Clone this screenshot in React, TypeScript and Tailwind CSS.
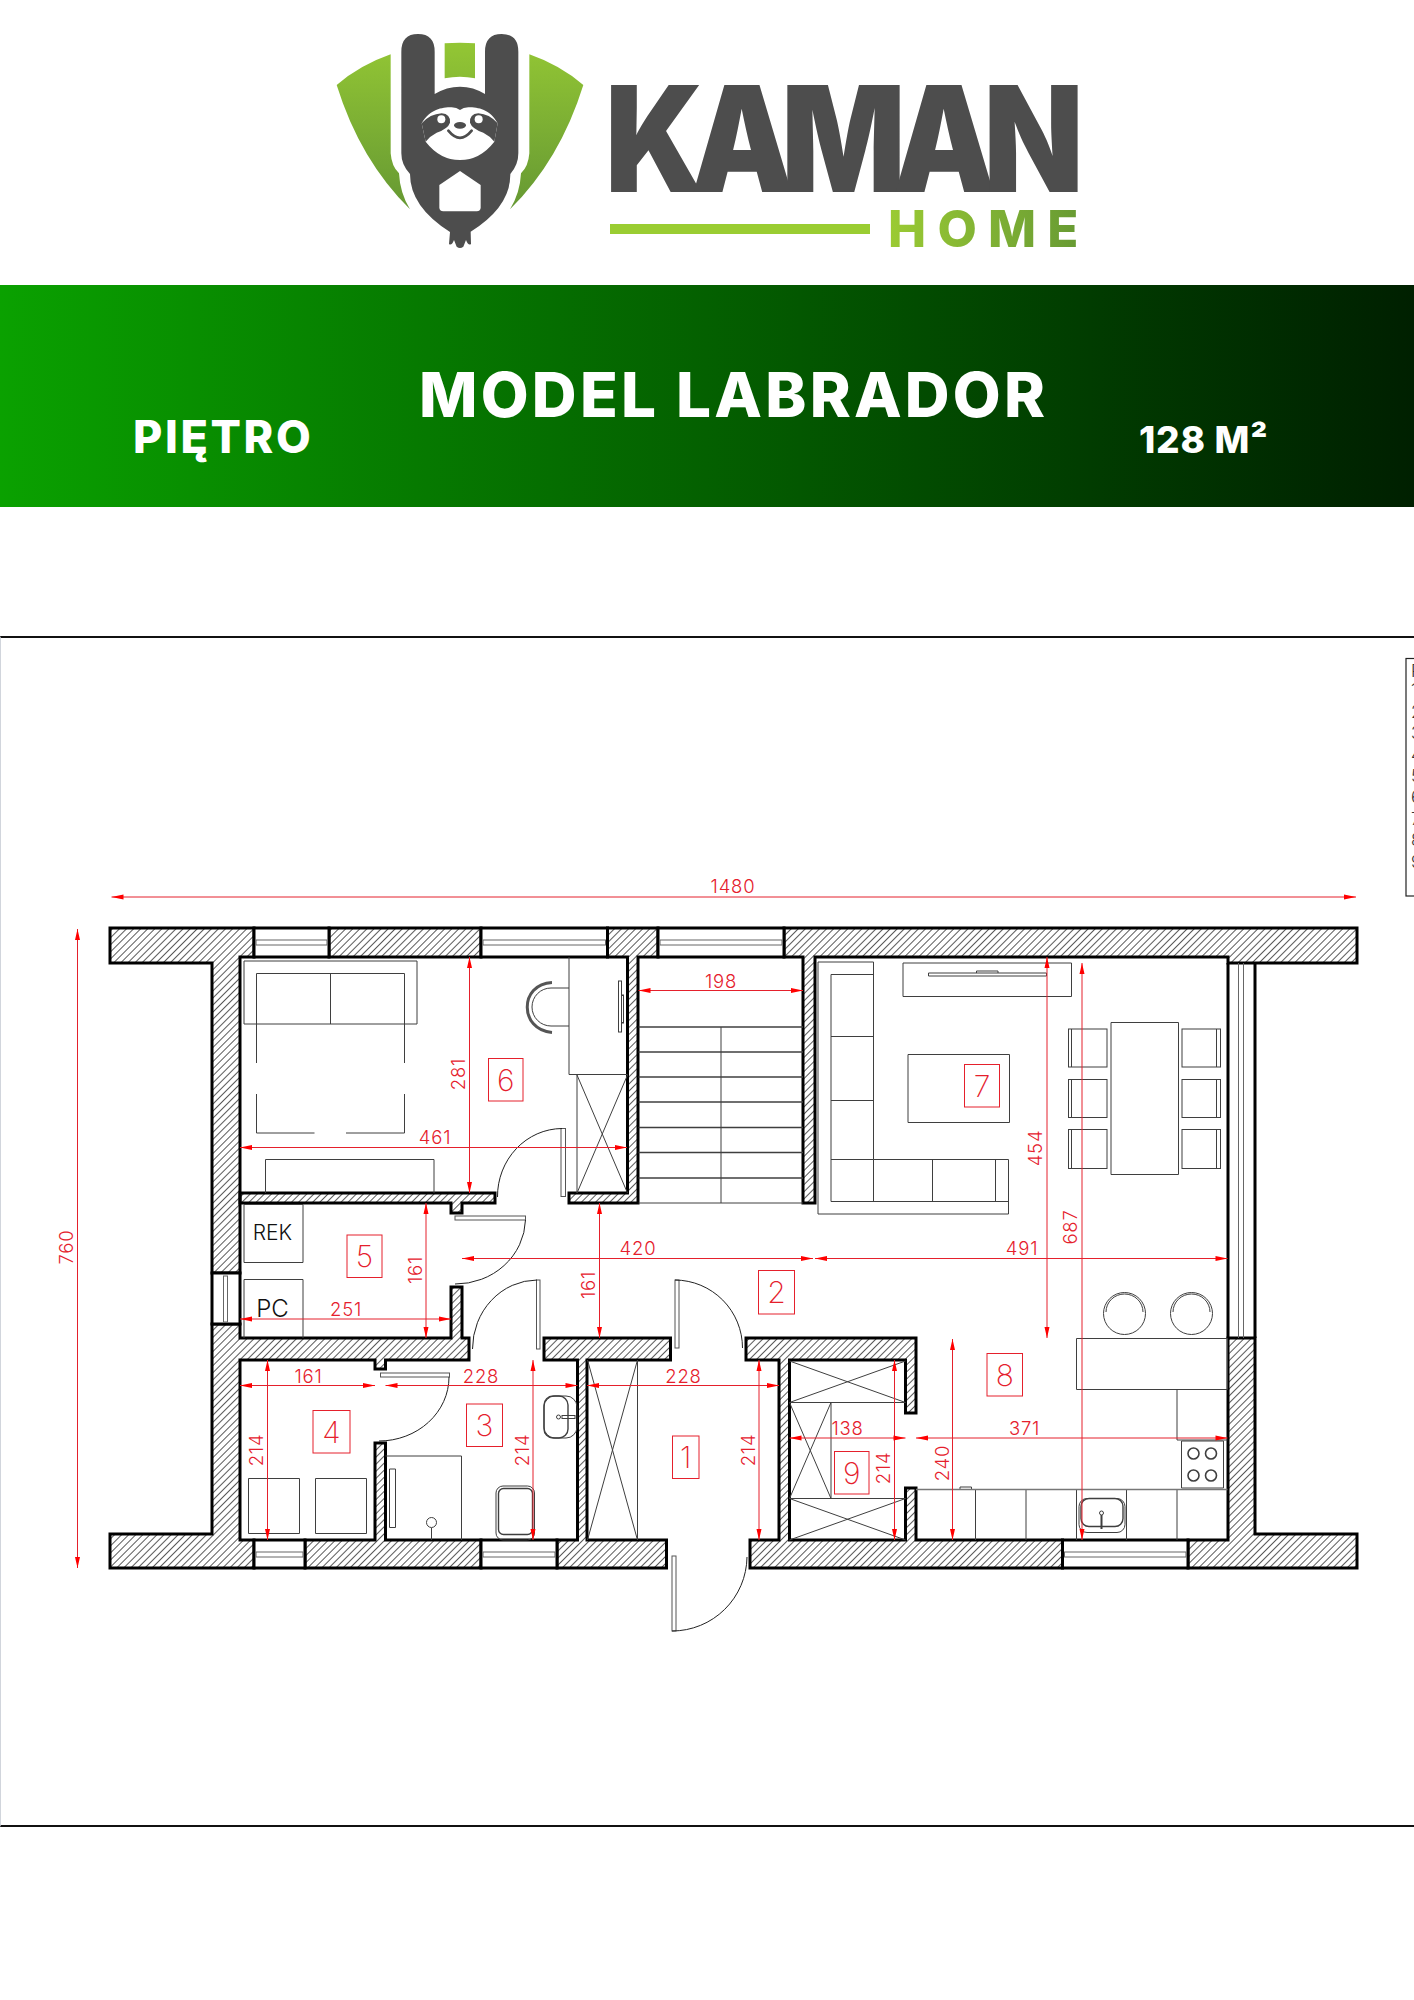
const INK = '#3f3f3f'
const RED = '#e5202c'

type Pt = [number, number]

const walls = [
  'M109 928H253V957H239V1273H211V963H109Z',
  'M328 928H480V957H328Z',
  'M606.5 928H657V957H637V1203H568V1193H626.5V957H606.5Z',
  'M783 928H1356V963H1227V957H814V1203H802V957H783Z',
  'M239 1193H494V1203H461V1213H450V1203H239Z',
  'M211 1324H239V1338H450V1287H461V1338H468V1360H384.5V1369H374V1360H239V1540H253V1568H109V1534H211Z',
  'M304 1540H374V1443H384.5V1540H480V1568H304Z',
  'M556 1540H576.5V1360H543V1338H669.5V1360H586V1540H665.5V1568H556Z',
  'M745 1338H915V1413H904.5V1360H788.5V1540H904.5V1488H915V1540H1061.5V1568H749V1540H778V1360H745Z',
  'M1187 1540H1227V1338H1254V1534H1356V1568H1187Z',
]

// horizontal window openings in the outer walls
const windows = [
  [253, 928, 75, 29, 940],
  [480, 928, 126.5, 29, 940],
  [657, 928, 126, 29, 940],
  [253, 1540, 51, 28, 1552],
  [480, 1540, 76, 28, 1552],
  [1061.5, 1540, 125.5, 28, 1552],
]

const lines = [
  // bedroom
  'M243 961H416V1024H243Z',
  'M255.5 1063V973.5H403.5V1063',
  'M329.5 973.5V1024',
  'M255.5 1094V1133H313.5M345 1133H403.5V1094',
  'M264.5 1193V1159.5H433V1193',
  'M568 957V1074.5H626.5',
  'M576 1075V1193M576 1075L626.5 1193M626.5 1075L576 1193',
  'M568 988H550A19 19 0 0 0 550 1026H568',
  // storage
  'M243 1204.5H302V1262.5H243ZM243 1338V1279.5H302V1338',
  // bath and room 4
  'M247.5 1478.5H298.5V1533.5H247.5ZM314.5 1478.5H365.5V1533.5H314.5Z',
  'M384.5 1456H460.5V1540',
  'M388.5 1469H394.5V1527.5H388.5Z',
  'M430.5 1528V1540',
  // entrance closet
  'M636.5 1360V1540M586.5 1360L636.5 1540M636.5 1360L586.5 1540',
  // closet 9
  'M788.5 1402.5H904.5M788.5 1498.5H904.5M830 1402.5V1498.5',
  'M788.5 1361L904.5 1402.5M904.5 1361L788.5 1402.5',
  'M788.5 1498.5L904.5 1540M904.5 1498.5L788.5 1540',
  'M788.5 1402.5L830 1498.5M830 1402.5L788.5 1498.5',
  // kitchen
  'M974.5 1489V1540M1025 1489V1540M1075.5 1489V1540M1125.5 1489V1540M1176 1489V1540',
  'M1075.5 1338.5H1226.5V1389.5H1075.5Z',
  'M1176 1389.5V1440H1226.5',
  'M1180.5 1441H1222.5V1488H1180.5Z',
  'M959 1489V1487H970.5V1489',
  // living room
  'M817 962H872.5V1159.5H1007.5V1214H817Z',
  'M872.5 974.5H830V1201.5H1007.5',
  'M830 1036.5H872.5M830 1100.5H872.5M830 1159.5H872.5',
  'M872.5 1159.5V1201.5M931.5 1159.5V1201.5M994.5 1159.5V1201.5',
  'M902 963H1070.5V996.5H902Z',
  'M927.5 973H1045.5V976H927.5ZM975.5 973V971H997V973',
  'M907 1054.5H1008.5V1122.5H907Z',
  'M1110 1022.5H1177.5V1174.5H1110Z',
  'M1070.5 1029V1067M1070.5 1079.5V1117.5M1070.5 1129.5V1168.5',
  'M1215.5 1029V1067M1215.5 1079.5V1117.5M1215.5 1129.5V1168.5',
  // stairs
  'M720 1027V1203M637.5 1203H802',
]

const treads = [1027, 1052, 1077, 1102, 1127.5, 1152.5, 1178]
const chairRows = [
  [1029, 38],
  [1079.5, 38],
  [1129.5, 39],
]

const doors = [
  { panel: [560, 1128.5, 4.5, 68], arc: 'M561 1128.5A65 68 0 0 0 496.5 1197' },
  { panel: [454, 1216, 70.5, 4], arc: 'M524.5 1220A70 66 0 0 1 454 1284' },
  { panel: [535.5, 1280, 3.5, 69], arc: 'M536 1280A65 69 0 0 0 471.5 1349' },
  { panel: [379.5, 1373, 69, 4], arc: 'M448 1377A70 64 0 0 1 378 1441' },
  { panel: [674, 1280, 4, 68], arc: 'M674 1280A68 68 0 0 1 741.5 1348' },
  { panel: [671, 1556, 4, 75], arc: 'M671 1631A75 75 0 0 0 746 1557' },
]

const dims: { a: Pt; b: Pt; label: string; at: Pt }[] = [
  { a: [110.5, 897], b: [1355, 897], label: '1480', at: [732, 893] },
  { a: [76.5, 929], b: [76.5, 1568], label: '760', at: [72, 1247] },
  { a: [239, 1147.5], b: [626, 1147.5], label: '461', at: [434, 1144] },
  { a: [468.5, 957], b: [468.5, 1193], label: '281', at: [464, 1074] },
  { a: [637.5, 990.5], b: [802, 990.5], label: '198', at: [720, 987.5] },
  { a: [461, 1258.5], b: [812, 1258.5], label: '420', at: [637, 1255] },
  { a: [814, 1258.5], b: [1226.5, 1258.5], label: '491', at: [1021, 1255] },
  { a: [1046, 957], b: [1046, 1338], label: '454', at: [1041, 1148] },
  { a: [1081, 963], b: [1081, 1540], label: '687', at: [1076, 1227] },
  { a: [425, 1203], b: [425, 1338], label: '161', at: [421, 1270] },
  { a: [598.5, 1203], b: [598.5, 1338], label: '161', at: [594, 1285] },
  { a: [239, 1319], b: [450, 1319], label: '251', at: [345, 1316] },
  { a: [239, 1385.5], b: [374, 1385.5], label: '161', at: [307.5, 1382.5] },
  { a: [384.5, 1385.5], b: [576.5, 1385.5], label: '228', at: [480, 1382.5] },
  { a: [586, 1385.5], b: [778, 1385.5], label: '228', at: [682.5, 1382.5] },
  { a: [266.5, 1360], b: [266.5, 1540], label: '214', at: [262, 1450] },
  { a: [532, 1360], b: [532, 1540], label: '214', at: [528, 1450] },
  { a: [758, 1360], b: [758, 1540], label: '214', at: [754, 1450] },
  { a: [893.5, 1360], b: [893.5, 1540], label: '214', at: [889, 1468] },
  { a: [788.5, 1438], b: [904.5, 1438], label: '138', at: [846.5, 1435] },
  { a: [915, 1438], b: [1226.5, 1438], label: '371', at: [1023.5, 1435] },
  { a: [951.5, 1339], b: [951.5, 1540], label: '240', at: [947.5, 1463] },
]

const roomTags = [
  ['1', 671.5, 1436, 26.5, 42.5],
  ['2', 757.5, 1270.5, 36, 43.5],
  ['3', 465.5, 1404, 36, 42.5],
  ['4', 312, 1410.5, 37, 42.5],
  ['5', 346, 1235, 35, 42.5],
  ['6', 487.5, 1058.5, 34.5, 42.5],
  ['7', 963.5, 1064.5, 35, 42.5],
  ['8', 986, 1353.5, 35.5, 42.5],
  ['9', 833.5, 1451.5, 34.5, 42.5],
] as const

function Dim({ a, b, label, at }: { a: Pt; b: Pt; label: string; at: Pt }) {
  const vertical = a[0] === b[0]
  const arrows = vertical
    ? `M${a[0]} ${a[1]}l-2.5 11h5ZM${b[0]} ${b[1]}l-2.5 -11h5Z`
    : `M${a[0]} ${a[1]}l12 -2.5v5ZM${b[0]} ${b[1]}l-12 -2.5v5Z`
  return (
    <g>
      <line x1={a[0]} y1={a[1]} x2={b[0]} y2={b[1]} stroke={RED} strokeWidth="1" />
      <path d={arrows} fill="#f00" />
      <text
        x={at[0]}
        y={at[1]}
        textAnchor="middle"
        fontSize="18.5"
        fontWeight="300"
        letterSpacing="0.8"
        fill={RED}
        transform={vertical ? `rotate(-90 ${at[0]} ${at[1]})` : undefined}
      >
        {label}
      </text>
    </g>
  )
}

function Logo() {
  return (
    <svg width="280" height="240" viewBox="0 0 840 720" className="shrink-0">
      <defs>
        <linearGradient id="leaf" x1="0" y1="70" x2="0" y2="570" gradientUnits="userSpaceOnUse">
          <stop offset="0" stopColor="#93c634" />
          <stop offset="1" stopColor="#659833" />
        </linearGradient>
      </defs>
      <path d="M50 195Q120 135 212 103V400Q215 440 237 460Q240 520 270 568Q120 420 50 195Z" fill="url(#leaf)" />
      <path d="M790 195Q720 135 628 103V400Q625 440 603 460Q600 520 570 568Q720 420 790 195Z" fill="url(#leaf)" />
      <path d="M374 70Q420 67 465 70V175Q420 165 374 175Z" fill="url(#leaf)" />
      <path
        d="M244 95Q244 42 294 42Q344 42 344 95V222Q380 200 420 200Q460 200 495 222V95Q495 42 545 42Q595 42 595 95V400Q595 435 571 462Q572 560 452 635L453 672Q445 678 438 660L430 680Q420 688 410 680L402 660Q395 678 387 672L390 636Q270 560 270 462Q244 435 244 400Z"
        fill="#4d4d4d"
      />
      <path
        d="M305 310C330 268 365 262 395 262Q410 262 420 270Q430 262 445 262C475 262 510 268 533 310L523 365Q480 420 420 420Q360 420 317 365Z"
        fill="#fff"
      />
      <path d="M305 310Q330 282 365 280Q392 282 390 308Q384 326 350 338Q330 348 317 365Z" fill="#4d4d4d" />
      <path d="M533 310Q508 282 475 280Q448 282 450 308Q456 326 490 338Q510 348 523 365Z" fill="#4d4d4d" />
      <circle cx="364" cy="298" r="12" fill="#fff" />
      <circle cx="476" cy="298" r="12" fill="#fff" />
      <ellipse cx="420" cy="316" rx="18" ry="10" fill="#4d4d4d" />
      <path d="M385 332Q420 375 455 332" fill="none" stroke="#4d4d4d" strokeWidth="8" strokeLinecap="round" />
      <path d="M420 453L482 495V562Q482 574 470 574H370Q358 574 358 562V495Z" fill="#fff" />
    </svg>
  )
}

function FloorPlan() {
  return (
    <svg width="1414" height="1188" viewBox="0 638 1414 1188" className="block" fontFamily="Inter, sans-serif">
      <defs>
        <pattern id="hatch" width="5" height="5" patternUnits="userSpaceOnUse" patternTransform="rotate(45)">
          <line x1="0" y1="0" x2="0" y2="5" stroke="#000" strokeWidth="1.3" />
        </pattern>
      </defs>

      {/* side table, cut off by the page edge */}
      <rect x="1405" y="658.5" width="20" height="237.5" fill="#fff" stroke="#222" strokeWidth="1.2" />
      {['R', '1', '2', '3', '4', '5', '6', '7', '8', '9'].map((t, i) => (
        <text key={t} x="1410" y={i === 0 ? 677 : 675 + i * 21.4} fontSize="17" fontWeight="300" fill="#333">
          {t}
        </text>
      ))}

      {walls.map((d) => (
        <path key={d} d={d} fill="url(#hatch)" stroke="#000" strokeWidth="3" strokeLinejoin="miter" />
      ))}

      {windows.map(([x, y, w, h, sill]) => (
        <g key={`${x}-${y}`}>
          <rect x={x} y={y} width={w} height={h} fill="#fff" stroke="#000" strokeWidth="3" />
          <rect x={x + 2} y={sill} width={w - 4} height={5} fill="#fff" stroke="#666" strokeWidth="1" />
        </g>
      ))}
      <rect x="211" y="1273" width="28" height="51" fill="#fff" stroke="#000" strokeWidth="3" />
      <rect x="222.5" y="1276" width="4" height="46" fill="#fff" stroke="#666" strokeWidth="1" />

      {/* terrace glazing */}
      <path d="M1227 963V1338M1254 963V1338" stroke="#000" strokeWidth="3" />
      <path d="M1237.5 963V1338M1242.5 963V1338" stroke="#666" strokeWidth="1" />

      <g fill="none" stroke={INK} strokeWidth="1">
        {lines.map((d) => (
          <path key={d} d={d} />
        ))}
        {treads.map((y) => (
          <line key={y} x1="637.5" x2="802" y1={y} y2={y} strokeWidth="1.4" />
        ))}
        {chairRows.map(([y, h]) => (
          <g key={y}>
            <rect x="1067.5" y={y} width="38.5" height={h} />
            <rect x="1181" y={y} width="38.5" height={h} />
          </g>
        ))}

        {/* chair, toilet, basins, hob */}
        <path d="M551 982.5C518 984 518 1030 551 1032.5" strokeWidth="3" stroke="#555" />
        <rect x="617.5" y="981" width="3" height="51" />
        <rect x="620.5" y="995" width="2" height="28" />
        <circle cx="430.5" cy="1522.5" r="5" />
        <rect x="495" y="1486" width="38.5" height="54" rx="7" />
        <rect x="497.5" y="1488.5" width="34" height="46" rx="5" strokeWidth="1.4" />
        <rect x="543" y="1396" width="33" height="42" rx="11" />
        <rect x="543" y="1396" width="24" height="42" rx="9" strokeWidth="1.4" />
        <circle cx="557.5" cy="1417" r="2" />
        <rect x="561" y="1415.5" width="13" height="3" />
        <rect x="1078" y="1498.5" width="46" height="34" rx="8" />
        <rect x="1080" y="1498.5" width="42" height="28" rx="8" strokeWidth="1.4" />
        <circle cx="1100.5" cy="1513" r="2" />
        <line x1="1100.5" x2="1100.5" y1="1515" y2="1529" strokeWidth="2" />
        <ellipse cx="1192.5" cy="1453.5" rx="5.5" ry="5.5" strokeWidth="1.6" />
        <ellipse cx="1210" cy="1453.5" rx="5.5" ry="5.5" strokeWidth="1.6" />
        <ellipse cx="1192.5" cy="1475.5" rx="5.5" ry="5.5" strokeWidth="1.6" />
        <ellipse cx="1210" cy="1475.5" rx="5.5" ry="5.5" strokeWidth="1.6" />

        {/* bar stools */}
        <circle cx="1123.5" cy="1313.5" r="21" />
        <circle cx="1190.5" cy="1313.5" r="21" />
        <path d="M1105 1312A18.5 18 0 0 1 1142 1312M1172 1312A18.5 18 0 0 1 1209 1312" />
        <line x1="915" x2="1226.5" y1="1489.5" y2="1489.5" stroke="#777" strokeWidth="1.6" />

        {doors.map(({ panel, arc }) => (
          <g key={arc}>
            <rect x={panel[0]} y={panel[1]} width={panel[2]} height={panel[3]} fill="#fff" stroke="#555" />
            <path d={arc} stroke="#222" />
          </g>
        ))}
      </g>

      <text x="271.5" y="1239.5" textAnchor="middle" fontSize="21" fontWeight="300" fill="#111">
        REK
      </text>
      <text x="271.5" y="1317" textAnchor="middle" fontSize="24" fontWeight="300" fill="#111">
        PC
      </text>

      {dims.map((d, i) => (
        <Dim key={i} {...d} />
      ))}

      {roomTags.map(([n, x, y, w, h]) => (
        <g key={n}>
          <rect x={x} y={y} width={w} height={h} fill="none" stroke={RED} strokeWidth="1" />
          <text x={x + w / 2} y={y + h / 2 + 11} textAnchor="middle" fontSize="30" fontWeight="200" fill={RED}>
            {n}
          </text>
        </g>
      ))}
    </svg>
  )
}

export default function App() {
  return (
    <div className="w-[1414px] h-[2000px] overflow-hidden bg-white font-['Inter',sans-serif]">
      {/* Logo */}
      <header className="h-[285px] flex pl-[320px] pt-[20px]">
        <Logo />
        <div className="ml-[10px] pt-[65px]">
          <div className="-ml-[5px] h-[107px] flex items-center origin-left scale-x-[0.886] text-[147px] leading-[107px] font-black tracking-[-0.1em] text-[#4d4d4d]">
            KAMAN
          </div>
          <div className="mt-[18px] flex items-center">
            <div className="w-[260px] h-[10px] bg-[#9acd32]" />
            <div className="ml-[18px] w-[193px] h-[37px] flex items-center text-[51px] leading-[37px] font-extrabold tracking-[0.22em] whitespace-nowrap bg-gradient-to-r from-[#9bcb33] to-[#679a33] bg-clip-text text-transparent">
              HOME
            </div>
          </div>
        </div>
      </header>

      {/* Banner */}
      <section className="h-[222px] flex bg-gradient-to-r from-[#0aa100] via-[#046000] to-[#002000] pl-[133px] font-extrabold text-white">
        <div className="w-[286px] pt-[118px] text-[45px] leading-[68px] tracking-[0.058em]">PIĘTRO</div>
        <div className="w-[720px] pt-[65px] text-[62px] leading-[90px] tracking-[0.052em]">MODEL LABRADOR</div>
        <div className="pt-[125px] text-[37px] leading-[60px] tracking-[0.02em]">128 M²</div>
      </section>

      {/* Plan */}
      <section className="mt-[129px] h-[1191px] border-y-2 border-[#111] border-l border-l-gray-300">
        <FloorPlan />
      </section>
    </div>
  )
}
